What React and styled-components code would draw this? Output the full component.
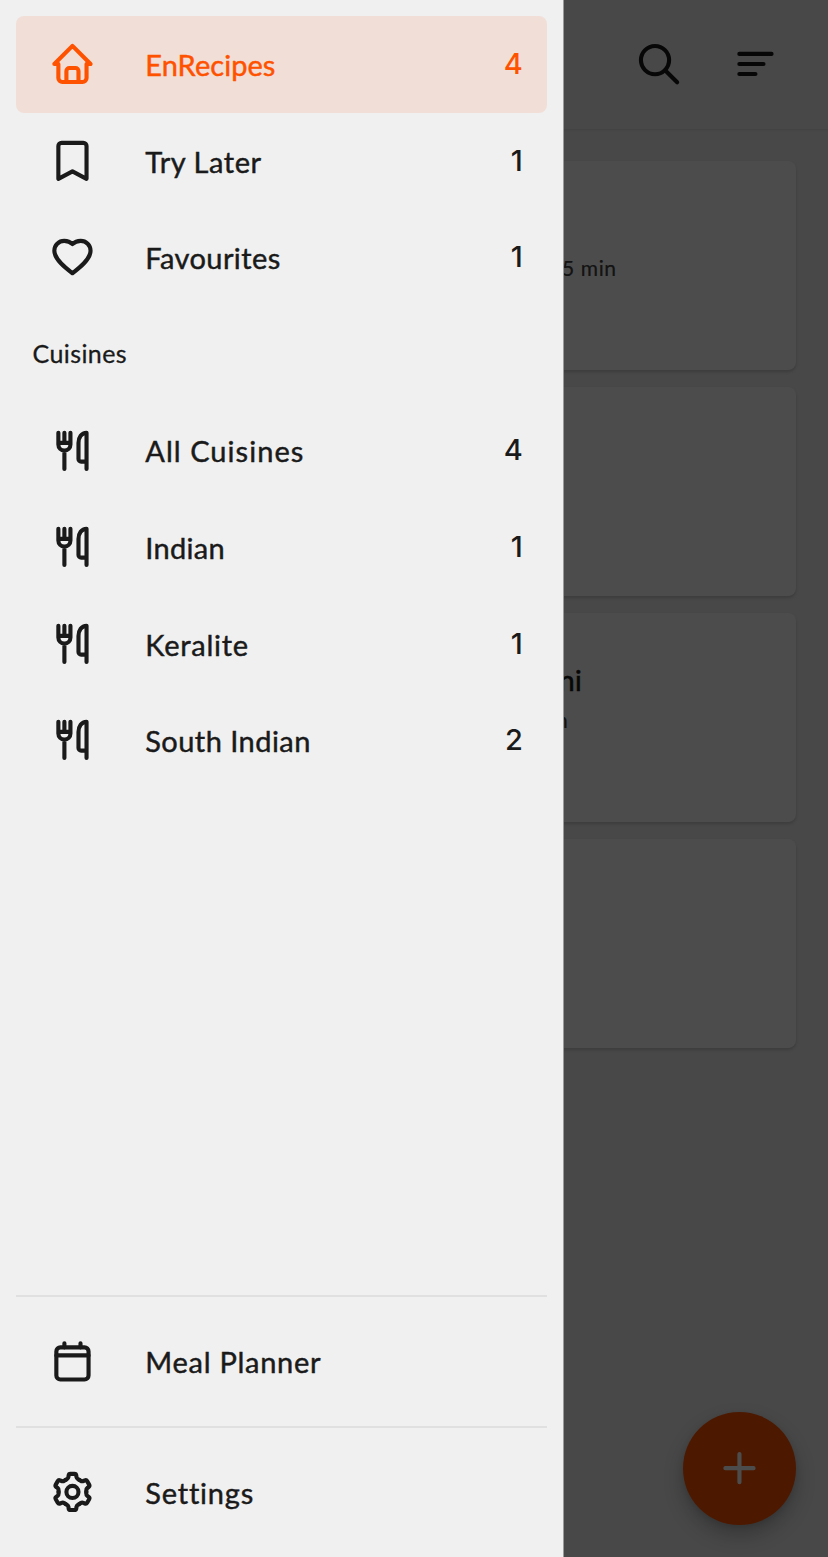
import React from "react";
import styled, { createGlobalStyle } from "styled-components";

const GlobalStyle = createGlobalStyle`
  * { box-sizing: border-box; }
  body { margin: 0; background: #f0f0f0; }
`;

const Phone = styled.div`
  position: relative;
  width: 828px;
  height: 1557px;
  overflow: hidden;
  background: #f0f0f0;
  color: #1a1a1a;
  font-family: Lato, "Open Sans", sans-serif;
`;

const Screen = styled.main`
  display: flex;
  flex-direction: column;
  height: 100%;
`;

const TopBar = styled.header`
  display: flex;
  justify-content: flex-end;
  align-items: center;
  height: 128.8px;
  padding-right: 24.2px;
  box-shadow: 0 1px 2px rgba(0, 0, 0, 0.09);
`;

const BarButton = styled.div`
  display: flex;
  justify-content: center;
  width: 96.6px;
`;

const RecipeList = styled.section`
  display: flex;
  flex-direction: column;
  gap: 16.7px;
  padding: 32.4px 32px 0 16px;
`;

const RecipeCard = styled.article`
  height: 209.3px;
  padding-top: ${(p) => p.$top || 0}px;
  border-radius: 8px;
  background: #fff;
  box-shadow: 0 2px 3px rgba(0, 0, 0, 0.16);
`;

const RecipeTitle = styled.div`
  padding-left: 543px;
  font-size: 28px;
  line-height: 36px;
  letter-spacing: 0.5px;
  -webkit-text-stroke: 0.6px currentColor;
`;

const RecipeTime = styled.div`
  margin-top: ${(p) => p.$gap || 0}px;
  padding-left: ${(p) => p.$left}px;
  color: #404040;
  font-size: 21px;
  line-height: 28px;
  letter-spacing: 0.6px;
  -webkit-text-stroke: 0.2px currentColor;
`;

const Scrim = styled.div`
  position: absolute;
  inset: 0;
  background: rgba(0, 0, 0, 0.7);
`;

const AddButton = styled.div`
  position: absolute;
  right: 32px;
  bottom: 32.2px;
  display: flex;
  align-items: center;
  justify-content: center;
  width: 112.8px;
  height: 112.8px;
  border-radius: 50%;
  background: #ff5200;
  color: #fff;
  box-shadow: 0 10px 20px rgba(0, 0, 0, 0.24), 0 2px 6px rgba(0, 0, 0, 0.1);
`;

const Drawer = styled.nav`
  position: absolute;
  top: 0;
  left: 0;
  bottom: 0;
  display: flex;
  flex-direction: column;
  width: 564px;
  padding: 16.1px 15.9px 16.1px 16.1px;
  border-right: 1px solid #9a9a9a;
  background: #f0f0f0;
`;

const Spacer = styled.div`
  flex: 1;
`;

const Row = styled.div`
  display: flex;
  align-items: center;
  flex: none;
  height: 96.6px;
  padding: 0 24.3px 0 32.2px;
  border-radius: 8px;
  color: ${(p) => (p.$active ? "#ff5200" : "#1a1a1a")};
  background: ${(p) => (p.$active ? "rgba(255, 82, 0, 0.1)" : "transparent")};
`;

const Label = styled.span`
  flex: 1;
  margin-left: 48.7px;
  padding-top: 1.2px;
  font-size: 29px;
  line-height: 36px;
  letter-spacing: ${(p) => p.$track}px;
  white-space: nowrap;
  -webkit-text-stroke: 0.45px currentColor;
`;

const Count = styled.span`
  padding-bottom: 0.8px;
  font-family: Inter, sans-serif;
  font-size: 29px;
  font-weight: 500;
  line-height: 36px;
`;

const SectionTitle = styled.div`
  display: flex;
  align-items: center;
  flex: none;
  height: 96.6px;
  padding: 0 0 2px 16.5px;
  font-size: 25px;
  letter-spacing: 0.4px;
  -webkit-text-stroke: 0.3px currentColor;
`;

const Divider = styled.div`
  flex: none;
  height: 2px;
  margin: ${(p) => p.$gap || 0}px 0 16.1px;
  background: #e0e0e0;
`;

const Svg = styled.svg`
  display: block;
  flex: none;
  width: 48.3px;
  height: 48.3px;
  fill: none;
  stroke: currentColor;
  stroke-width: 2.05;
  stroke-linecap: round;
  stroke-linejoin: round;
`;

const GEAR_TOOTH =
  "M-3.45-5.98L-2.9-6.25Q-2.1-6.7-2-7.4L-1.9-8.2Q-1.8-9-1-9H1Q1.8-9 1.9-8.2L2-7.4Q2.1-6.7 2.9-6.25L3.45-5.98";

const shapes = {
  home: (
    <path d="M5 12H3l9-9 9 9h-2M5 12v7a2 2 0 0 0 2 2h10a2 2 0 0 0 2-2v-7M9 21v-5.5a1.5 1.5 0 0 1 1.5-1.5h3a1.5 1.5 0 0 1 1.5 1.5V21" />
  ),
  bookmark: <path d="M5 20.9V4.6A1.6 1.6 0 0 1 6.6 3h10.8A1.6 1.6 0 0 1 19 4.6v16.3l-7-3.7z" />,
  heart: (
    <path d="M12 20.1C8.5 17.4 3 13.2 3 8.9A4.9 4.9 0 0 1 7.9 4C9.5 4 11 4.6 12 5.6C13 4.6 14.5 4 16.1 4A4.9 4.9 0 0 1 21 8.9C21 13.2 15.5 17.4 12 20.1z" />
  ),
  cutlery: (
    <path d="M5 3v5.8a3 3 0 0 0 6 0V3M8 3v5M5 8h6M8 11.8V21M19 21V3c-2.5 0-4 2.3-4 5v8a1.3 1.3 0 0 0 1.3 1.3H19" />
  ),
  calendar: (
    <g transform="translate(0 -0.25)">
      <rect x="4" y="5" width="16" height="16" rx="2" />
      <path d="M4 9h16M8 3v2M16 3v2" />
    </g>
  ),
  gear: (
    <g transform="translate(12 12)">
      {[0, 60, 120, 180, 240, 300].map((a) => (
        <path key={a} d={GEAR_TOOTH} transform={`rotate(${a})`} />
      ))}
      <circle r="3" />
    </g>
  ),
  search: (
    <>
      <circle cx="9.8" cy="10.1" r="7" />
      <path d="M14.8 15.100l6 6" />
    </>
  ),
  sort: <path d="M4 7h16M4 12h12M4 17h8" />,
  plus: <path d="M12 5.1v14M5 12.1h14" />,
};

const Icon = ({ name }) => <Svg viewBox="-0.15 0.1 24 24">{shapes[name]}</Svg>;

const NavRow = ({ icon, label, count, track = 0.5, active }) => (
  <Row $active={active}>
    <Icon name={icon} />
    <Label $track={track}>{label}</Label>
    {count !== undefined && <Count>{count}</Count>}
  </Row>
);

export default function App() {
  return (
    <Phone>
      <GlobalStyle />
      <Screen>
        <TopBar>
          <BarButton><Icon name="search" /></BarButton>
          <BarButton><Icon name="sort" /></BarButton>
        </TopBar>
        <RecipeList>
          <RecipeCard $top={93}>
            <RecipeTime $left={546}>5 min</RecipeTime>
          </RecipeCard>
          <RecipeCard />
          <RecipeCard $top={49}>
            <RecipeTitle>ni</RecipeTitle>
            <RecipeTime $left={540} $gap={7.5}>n</RecipeTime>
          </RecipeCard>
          <RecipeCard />
        </RecipeList>
        <AddButton><Icon name="plus" /></AddButton>
      </Screen>
      <Scrim />
      <Drawer>
        <NavRow icon="home" label="EnRecipes" count={4} track={0.05} active />
        <NavRow icon="bookmark" label="Try Later" count={1} track={0.55} />
        <NavRow icon="heart" label="Favourites" count={1} track={0.4} />
        <SectionTitle>Cuisines</SectionTitle>
        <NavRow icon="cutlery" label="All Cuisines" count={4} track={1.05} />
        <NavRow icon="cutlery" label="Indian" count={1} track={0.3} />
        <NavRow icon="cutlery" label="Keralite" count={1} track={0.75} />
        <NavRow icon="cutlery" label="South Indian" count={2} track={0.45} />
        <Spacer />
        <Divider />
        <NavRow icon="calendar" label="Meal Planner" track={0.73} />
        <Divider $gap={16.1} />
        <NavRow icon="gear" label="Settings" track={0.8} />
      </Drawer>
    </Phone>
  );
}
